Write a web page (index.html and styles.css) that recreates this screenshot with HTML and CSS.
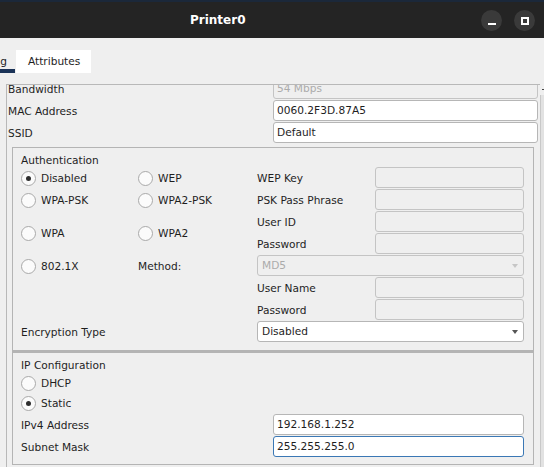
FILE: index.html
```html
<!DOCTYPE html>
<html>
<head>
<meta charset="utf-8">
<link rel="stylesheet" href="styles.css">
</head>
<body>
<div class="titlebar">
  <div class="title">Printer0</div>
  <div class="winbtns">
    <span class="wbtn"><span class="min"></span></span>
    <span class="wbtn"><span class="max"></span></span>
  </div>
</div>
<div class="tabs">
  <div class="tab prev">Config</div>
  <div class="tab active">Attributes</div>
</div>
<div class="area">
  <div class="view">
    <div class="inner">
      <div class="frow"><span class="lbl">Bandwidth</span><div class="field disabled">54 Mbps</div></div>
      <div class="frow"><span class="lbl">MAC Address</span><div class="field">0060.2F3D.87A5</div></div>
      <div class="frow"><span class="lbl">SSID</span><div class="field">Default</div></div>

      <div class="group auth">
        <div class="gtitle">Authentication</div>
        <div class="agrid">
          <label class="radio r1"><span class="dot on"></span>Disabled</label>
          <label class="radio r1c2"><span class="dot"></span>WEP</label>
          <span class="lbl c3 r1">WEP Key</span>
          <div class="field disabled c4 r1"></div>

          <label class="radio r2"><span class="dot"></span>WPA-PSK</label>
          <label class="radio r2c2"><span class="dot"></span>WPA2-PSK</label>
          <span class="lbl c3 r2">PSK Pass Phrase</span>
          <div class="field disabled c4 r2"></div>

          <label class="radio r34"><span class="dot"></span>WPA</label>
          <label class="radio r34c2"><span class="dot"></span>WPA2</label>
          <span class="lbl c3 r3">User ID</span>
          <div class="field disabled c4 r3"></div>
          <span class="lbl c3 r4">Password</span>
          <div class="field disabled c4 r4"></div>

          <label class="radio r5"><span class="dot"></span>802.1X</label>
          <span class="lbl r5c2">Method:</span>
          <div class="select disabled r5c34">MD5<span class="arrow"></span></div>

          <span class="lbl c3 r6">User Name</span>
          <div class="field disabled c4 r6"></div>
          <span class="lbl c3 r7">Password</span>
          <div class="field disabled c4 r7"></div>

          <span class="lbl r8">Encryption Type</span>
          <div class="select r8c34">Disabled<span class="arrow"></span></div>
        </div>
      </div>

      <div class="group ip">
        <div class="gtitle">IP Configuration</div>
        <label class="radio iprow"><span class="dot"></span>DHCP</label>
        <label class="radio iprow"><span class="dot on"></span>Static</label>
        <div class="ipgrid">
          <span class="lbl">IPv4 Address</span><div class="field">192.168.1.252</div>
          <span class="lbl">Subnet Mask</span><div class="field focus">255.255.255.0</div>
        </div>
      </div>
    </div>
  </div>
  <div class="vscroll"><span class="vsarrow"></span><span class="vstrack"></span></div>
</div>
</body>
</html>
```

FILE: styles.css
```css
* { box-sizing: border-box; }
html, body { margin: 0; padding: 0; }
body {
  width: 544px;
  height: 467px;
  overflow: hidden;
  background: #efefef;
  font-family: "DejaVu Sans", sans-serif;
  font-size: 10.6px;
  color: #1e1e1e;
}

.titlebar {
  height: 38px;
  background: #242424;
  border-top: 2px solid #1b283a;
  display: flex;
  align-items: center;
}
.title {
  color: #ffffff;
  font-weight: bold;
  font-size: 12px;
  padding-left: 190px;
  flex: 1;
  padding-bottom: 1px;
}
.winbtns {
  display: flex;
  gap: 12px;
  padding-right: 9px;
  padding-top: 1px;
}
.wbtn {
  width: 21px;
  height: 21px;
  border-radius: 50%;
  background: #3a3a3a;
  display: flex;
  align-items: center;
  justify-content: center;
}
.min {
  width: 8px;
  height: 2px;
  background: #fff;
  margin-top: 7px;
}
.max {
  width: 8px;
  height: 8px;
  border: 2px solid #fff;
}

.tabs {
  height: 35px;
  display: flex;
  align-items: flex-end;
}
.tab {
  height: 23px;
  line-height: 13px;
  padding: 5px 12px 5px 12px;
  white-space: nowrap;
}
.tab.prev {
  margin-left: -45px;
  width: 60px;
  padding-left: 4px;
  padding-right: 8px;
  text-align: right;
  border-bottom: 4px solid #1b3358;
  display: flex;
  justify-content: flex-end;
}
.tab.active {
  background: #ffffff;
  margin-left: 1px;
  width: 75px;
}

.area {
  display: flex;
  margin-top: 11px;
  height: 383px;
}
.view {
  margin-left: 6px;
  width: 534px;
  height: 383px;
  border-left: 1px solid #b8b8b8;
  border-top: 1px solid #b8b8b8;
  overflow: hidden;
}
.inner {
  margin-top: -7px;
  padding-left: 1px;
  padding-right: 2px;
}
.frow {
  display: grid;
  grid-template-columns: 265px 1fr;
  align-items: center;
  height: 21px;
  margin-bottom: 1px;
}
.lbl {
  white-space: nowrap;
}

.field, .select {
  height: 21px;
  background: #ffffff;
  border: 1px solid #b6b6b6;
  border-radius: 3px;
  padding-left: 3px;
  line-height: 19px;
  white-space: nowrap;
  overflow: hidden;
}
.field.disabled, .select.disabled {
  background: #efefef;
  color: #ababab;
  border-color: #c4c4c4;
}
.field.focus {
  border-color: #3b78b5;
}
.select {
  position: relative;
  padding-left: 4px;
}
.arrow {
  position: absolute;
  right: 5px;
  top: 8px;
  width: 0;
  height: 0;
  border-left: 3.5px solid transparent;
  border-right: 3.5px solid transparent;
  border-top: 4px solid #555;
}
.select.disabled .arrow {
  border-top-color: #c6c6c6;
}

.group {
  margin: 0 4px;
  border: 1px solid #b4b4b4;
}
.auth {
  margin-top: 4px;
  padding: 0 9px 7px 8px;
}
.gtitle {
  padding-top: 6px;
  line-height: 13px;
}

.agrid {
  display: grid;
  grid-template-columns: 117px 119px 118px 149px;
  grid-template-rows: repeat(8, 22px);
  align-items: center;
}
.radio {
  display: flex;
  align-items: center;
  gap: 5px;
  white-space: nowrap;
}
.dot {
  width: 15px;
  height: 15px;
  border-radius: 50%;
  border: 1px solid #a9a9a9;
  background: #fbfbfb;
  display: flex;
  align-items: center;
  justify-content: center;
  flex: none;
}
.dot.on::after {
  content: "";
  width: 5px;
  height: 5px;
  border-radius: 50%;
  background: #2e2e2e;
}

.r1 { grid-row: 1; grid-column: 1; }
.r1c2 { grid-row: 1; grid-column: 2; }
.r2 { grid-row: 2; grid-column: 1; }
.r2c2 { grid-row: 2; grid-column: 2; }
.r34 { grid-row: 3 / 5; grid-column: 1; }
.r34c2 { grid-row: 3 / 5; grid-column: 2; }
.r5 { grid-row: 5; grid-column: 1; }
.r5c2 { grid-row: 5; grid-column: 2; }
.r5c34 { grid-row: 5; grid-column: 3 / 5; }
.r8 { grid-row: 8; grid-column: 1 / 3; }
.r8c34 { grid-row: 8; grid-column: 3 / 5; }
.c3 { grid-column: 3; }
.c4 { grid-column: 4; }
.c3.r1, .c4.r1 { grid-row: 1; }
.c3.r2, .c4.r2 { grid-row: 2; }
.c3.r3, .c4.r3 { grid-row: 3; }
.c3.r4, .c4.r4 { grid-row: 4; }
.c3.r6, .c4.r6 { grid-row: 6; }
.c3.r7, .c4.r7 { grid-row: 7; }
.agrid .field, .agrid .select { align-self: start; }

.ip {
  border-top-width: 2px;
  padding: 0 9px 7px 8px;
}
.iprow {
  height: 20px;
}
.ip .gtitle + .iprow {
  margin-top: 1px;
}
.ipgrid {
  display: grid;
  grid-template-columns: 252px 251px;
  grid-auto-rows: 21px;
  row-gap: 1px;
  align-items: center;
  margin-top: 1px;
}

.vscroll {
  width: 4px;
  display: flex;
  flex-direction: column;
}
.vsarrow {
  height: 11px;
  position: relative;
}
.vsarrow::after {
  content: "";
  position: absolute;
  left: 2px;
  top: 5px;
  width: 2px;
  height: 1px;
  background: #444;
}
.vstrack {
  flex: 1;
  background: #e2e2e2;
  border-left: 1px solid #c8c8c8;
}
```
